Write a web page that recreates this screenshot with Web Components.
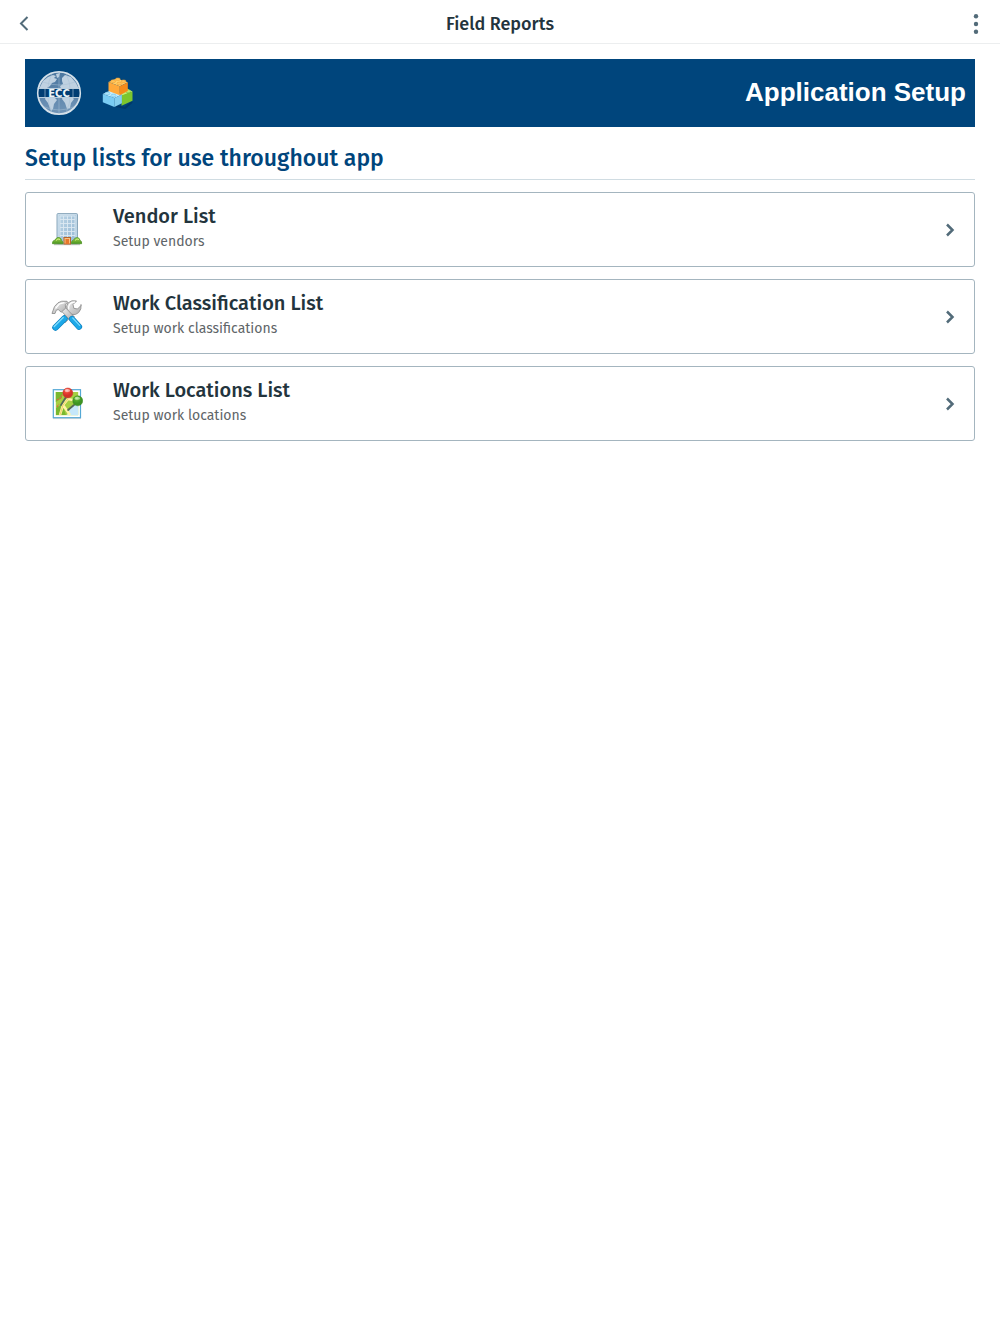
<!DOCTYPE html>
<html lang="en">
<head>
<meta charset="utf-8">
<meta name="viewport" content="width=device-width, initial-scale=1">
<title>Field Reports</title>
<style>
    body {
        --brand-color: #00457c;
        --text-color: #23343d;
        --text-secondary: #606568;
        --icon-color: #526b79;
        --border-color: #a4b5bf;
        --divider-color: #d0dce2;
        margin: 0;
        background: #fff;
        color: var(--text-color);
        font-family: "Fira Sans", "Noto Sans", sans-serif;
    }
    main {
        display: flex;
        flex-direction: column;
        gap: 12px;
        padding: 15px 25px;
    }
</style>
</head>
<body>
<app-header title-text="Field Reports"></app-header>
<main>
    <app-banner>Application Setup</app-banner>
    <section-title>Setup lists for use throughout app</section-title>
    <list-card href="#vendors" icon="building">
        Vendor List
        <span slot="detail">Setup vendors</span>
    </list-card>
    <list-card href="#classifications" icon="tools">
        Work Classification List
        <span slot="detail">Setup work classifications</span>
    </list-card>
    <list-card href="#locations" icon="map">
        Work Locations List
        <span slot="detail">Setup work locations</span>
    </list-card>
</main>

<script>
const ICONS = {
    building: `
        <defs>
            <linearGradient id="wall" x2="1" y2="1"><stop stop-color="#bdd5e6"/><stop offset="1" stop-color="#94b8d3"/></linearGradient>
            <linearGradient id="bush" x2="0" y2="1"><stop stop-color="#a4d84d"/><stop offset="1" stop-color="#4b9420"/></linearGradient>
        </defs>
        <path d="M3 31.5h26" stroke="#777" stroke-opacity=".45" stroke-width="1.4"/>
        <rect x="6" y=".6" width="20.5" height="30" rx="1" fill="url(#wall)" stroke="#8aa7bb"/>
        <rect x="7.2" y="1.7" width="18" height="27" fill="none" stroke="#d3e3ee" stroke-width=".8"/>
        <path d="M9 6.5h15M9 10.5h15M9 14.5h15M9 18.5h15M9 22.5h15M12.5 3v21M16.5 3v21M20.5 3v21M9 3v21M24 3v21M9 3h15" stroke="#dce9f2" stroke-width=".9" fill="none"/>
        <rect x="13" y="24.5" width="6.5" height="6.5" fill="#f8c080" stroke="#b8652b"/>
        <rect x="14.5" y="26" width="3.5" height="5" fill="#e7772b"/>
        <path d="M1.5 30.7q-.3-3 2.3-3.5 2-3.6 4.5-2.6 2 .7 2.200 2.800 2 .8 1.500 3.300zM20.500 30.700q-.4-3 1.800-3.400 2-3.500 4.600-2.600 2 .7 2 2.600 2.300 1 1.700 3.400z" fill="url(#bush)" stroke="#55972c" stroke-width=".9"/>
        <path d="M5 27.500q2-2.600 4-.8M24 27.400q2-2.500 4-.7" stroke="#ccec7e" fill="none"/>`,
    tools: `
        <defs>
            <linearGradient id="steel" x2="1" y2="1"><stop stop-color="#f4f4f4"/><stop offset="1" stop-color="#a8a8a8"/></linearGradient>
        </defs>
        <path d="m10 19 8-8 4 4-8 8z" fill="#d0d0d0" stroke="#999" stroke-width=".7"/>
        <path d="M30 5.500 26.500 9 22.800 8.300 22 4.500 25.500 1q-5-1.300-8.200 1.800-2.600 3-1.300 6.800l-3 3.200 4.600 4.600 3.200-3q4 1 6.800-1.800 3.200-3.400 2.400-8.100z" fill="url(#steel)" stroke="#919191" stroke-width=".9"/>
        <path d="M24 2.200q-3.500-.3-5.400 2.200-1.500 2.300-.7 5" stroke="#fff" stroke-width="1.200" fill="none"/>
        <path d="M13.500 18.500 4.500 27.500" stroke="#0c82c2" stroke-width="6.400" stroke-linecap="round"/>
        <path d="M13.500 18.500 4.500 27.500" stroke="#1ca8e8" stroke-width="5" stroke-linecap="round"/>
        <path d="m12.200 17.600-9 9" stroke="#7dd9fb" stroke-width="1.400" stroke-linecap="round"/>
        <path d="m10.200 10.800 3.800-3.600 9.300 9.600-4 3.700z" fill="url(#steel)" stroke="#888" stroke-width=".8"/>
        <path d="M1 13.500 3.500 6.500 7 2.800Q10 .4 16 1.300l1 1.300-2.800 2.200.6 3.200-4.600 4.200-3-2.700-2 .8-1.200 3.200z" fill="url(#steel)" stroke="#919191" stroke-width=".9"/>
        <path d="m4.500 8.500 4-4.600 5-1.200" stroke="#fff" stroke-width="1.200" fill="none"/>
        <path d="m21 19 7 7.800" stroke="#0c82c2" stroke-width="6.200" stroke-linecap="round"/>
        <path d="m21 19 7 7.800" stroke="#1ca8e8" stroke-width="4.800" stroke-linecap="round"/>
        <path d="m21.800 18 6.800 7.400" stroke="#79d7fb" stroke-width="1.300" stroke-linecap="round"/>`,
    map: `
        <defs>
            <radialGradient id="red" cx=".4" cy=".25"><stop stop-color="#ff9a86"/><stop offset=".5" stop-color="#ed4335"/><stop offset="1" stop-color="#d0332a"/></radialGradient>
            <radialGradient id="green" cx=".4" cy=".25"><stop stop-color="#a8e46b"/><stop offset=".5" stop-color="#50aa2b"/><stop offset="1" stop-color="#3d9423"/></radialGradient>
        </defs>
        <path d="M2 31.600h28" stroke="#777" stroke-opacity=".3"/>
        <rect x="2.300" y="2.700" width="27.200" height="28" fill="#fff" stroke="#54a8d5" stroke-width="1.200"/>
        <rect x="4.800" y="5" width="22.400" height="23.200" fill="#a5cf43"/>
        <path d="M4.800 5h7l-1 6-6 4zM5 21l6-4 4 11H5z" fill="#79b82f"/>
        <path d="m16 28 4-8 7.200-4v12.200z" fill="#c5e7fa"/>
        <path d="m9 28 3-10 5-6 10 2M12 18l7 10" stroke="#fff4a6" stroke-width="2.500" fill="none"/>
        <path d="M9 28 12 18l5-6" stroke="#e8bb4a" stroke-width=".7" fill="none"/>
        <path d="m6 13 3-2m-3 9 2-3m1-5 2-4" stroke="#df6541" stroke-width="1.200" stroke-dasharray="2 1"/>
        <path d="m15 10-5 8M23 18l-6 5" stroke="#53695a" stroke-width="1.700" stroke-linecap="round"/>
        <circle cx="16.800" cy="6" r="5" fill="url(#red)" stroke="#ca342b" stroke-width=".5"/>
        <ellipse cx="16.400" cy="3.400" rx="2.800" ry="1.500" fill="#fff" opacity=".5"/>
        <circle cx="26.700" cy="13.800" r="5" fill="url(#green)" stroke="#39831f" stroke-width=".5"/>
        <ellipse cx="26.300" cy="11.200" rx="2.800" ry="1.500" fill="#fff" opacity=".45"/>`
};

class AppHeader extends HTMLElement {
    constructor() {
        super();
        this.attachShadow({ mode: 'open' });
    }

    connectedCallback() {
        const title = this.getAttribute('title-text') || '';

        this.shadowRoot.innerHTML = `
        <style>
            :host {
                display: grid;
                grid-template-columns: 48px 1fr 48px;
                align-items: center;
                height: 43px;
                border-bottom: 1px solid #eceeef;
            }
            h1 {
                margin: 0;
                padding-top: 4px;
                font-size: 18px;
                line-height: 24px;
                font-weight: 500;
                text-align: center;
            }
            button {
                display: flex;
                align-items: center;
                justify-content: center;
                height: 43px;
                padding: 4px 0 0;
                border: 0;
                background: none;
                color: var(--icon-color);
            }
        </style>
        <button type="button" aria-label="Back">
            <svg width="16" height="20" viewBox="0 0 16 20" fill="none" stroke="currentColor" stroke-width="2"><path d="M11.500 3 5 9.500l6.500 6.500"/></svg>
        </button>
        <h1>${title}</h1>
        <button type="button" aria-label="More options">
            <svg width="8" height="20" viewBox="0 0 8 20" fill="currentColor"><circle cx="4" cy="2.200" r="2.200"/><circle cx="4" cy="10" r="2.200"/><circle cx="4" cy="17.800" r="2.200"/></svg>
        </button>
        `;
    }
}

class AppBanner extends HTMLElement {
    constructor() {
        super();
        this.attachShadow({ mode: 'open' });
    }

    connectedCallback() {
        this.shadowRoot.innerHTML = `
        <style>
            :host {
                display: flex;
                align-items: center;
                gap: 20px;
                height: 68px;
                padding: 0 9px 0 11px;
                background: var(--brand-color);
                color: #fff;
            }
            .title {
                flex: 1;
                padding-bottom: 2px;
                font-family: "Liberation Sans", Arial, sans-serif;
                font-size: 26px;
                line-height: 32px;
                font-weight: 700;
                text-align: right;
            }
        </style>
        <svg width="46" height="46" viewBox="0 0 46 46" role="img" aria-label="ECC">
            <defs>
                <linearGradient id="sea" x2="0" y2="1"><stop stop-color="#4a769f"/><stop offset="1" stop-color="#7195b8"/></linearGradient>
                <clipPath id="globe"><circle cx="23" cy="23" r="20.500"/></clipPath>
            </defs>
            <circle cx="23" cy="23" r="21.200" fill="url(#sea)" stroke="#d4e0e9" stroke-width="1.800"/>
            <g clip-path="url(#globe)">
                <path d="M4 17 7 11 12 7l5-2 3 1-2 2 3 1-2 3-3 1-2 3-3 2H4zM20 4l4-1-1 4-2 1zM26 8l3-3 6 2 5 6 3 6-4-1-2 2h-5l-3-2-4 1-1-3 3-2-1-3zM10 26l8 1 3 3-3 4-1 5-2 2-3-8-3-4zM27 26h8l3 3-3 4-1 5-3 1-2-6-3-4z" fill="#bfd1e1"/>
                <path d="M7 12q16 6 32 0M6 36q17 8 34 0M16 3q-9 20 0 40M30 3q9 20 0 40M23 2v42" fill="none" stroke="#a9c1d5" stroke-width=".5"/>
                <path d="M0 18h46v10H0z" fill="#b9cddd"/>
                <path d="M0 19h46v8H0z" fill="#003d73"/>
                <path d="M9 19v8M37 19v8" stroke="#6f94b5" stroke-width="1"/>
            </g>
            <text x="23" y="26.600" text-anchor="middle" font-family="DejaVu Sans" font-size="10" font-weight="700" fill="#eef4f8">ECC</text>
        </svg>
        <svg width="32" height="32" viewBox="0 0 32 32" aria-hidden="true">
            <path d="m14 29 9 2 7-6" stroke="#002c57" stroke-opacity=".5" stroke-width="2" fill="none"/>
            <path d="m18 14 7-2.500 5.500 3L20 19z" fill="#c3ef75"/>
            <path d="m19.500 18.500 11-4v9.300l-11 5z" fill="#7cc62d"/>
            <ellipse cx="26" cy="14.200" rx="2.600" ry="1.500" fill="#bcea6c" stroke="#72b736" stroke-width=".5"/>
            <path d="m.8 17 7.500-3.500 11.600 4-7.500 3.500z" fill="#c3edff"/>
            <path d="m.8 17 11.600 4v9L.8 25.300z" fill="#7accf3"/>
            <path d="m12.400 21 7.500-3.500v8.700L12.400 30z" fill="#86cfee"/>
            <g fill="#ace4fc" stroke="#60b8df" stroke-width=".5"><ellipse cx="5.500" cy="16.500" rx="2.500" ry="1.400"/><ellipse cx="11.500" cy="18.500" rx="2.500" ry="1.400"/></g>
            <path d="m6.500 5 8-3.500 11.300 3.800-8 4z" fill="#ffcf68"/>
            <path d="m6.500 5 11.300 4.300v9L6.500 14z" fill="#ffa93a"/>
            <path d="m17.800 9.300 8-4V14l-8 4.300z" fill="#f58b1a"/>
            <g fill="#ffc35a" stroke="#ee9726" stroke-width=".5">
                <ellipse cx="15.900" cy="2.200" rx="2.400" ry="1.300"/>
                <ellipse cx="21.600" cy="4.200" rx="2.400" ry="1.300"/>
                <ellipse cx="11.200" cy="4.200" rx="2.500" ry="1.400"/>
                <ellipse cx="17.400" cy="6.500" rx="2.500" ry="1.400"/>
            </g>
        </svg>
        <div class="title"><slot></slot></div>
        `;
    }
}

class SectionTitle extends HTMLElement {
    constructor() {
        super();
        this.attachShadow({ mode: 'open' });
    }

    connectedCallback() {
        this.shadowRoot.innerHTML = `
        <style>
            :host {
                display: block;
                border-bottom: 1px solid var(--divider-color);
                color: var(--brand-color);
            }
            h2 {
                margin: 0;
                padding: 3px 0 5px;
                font-size: 23px;
                line-height: 32px;
                font-weight: 500;
            }
        </style>
        <h2><slot></slot></h2>
        `;
    }
}

class ListCard extends HTMLElement {
    constructor() {
        super();
        this.attachShadow({ mode: 'open' });
    }

    connectedCallback() {
        const href = this.getAttribute('href') || '#';
        const icon = ICONS[this.getAttribute('icon')] || '';

        this.shadowRoot.innerHTML = `
        <style>
            :host {
                display: block;
            }
            a {
                display: flex;
                align-items: center;
                box-sizing: border-box;
                min-height: 75px;
                padding: 0 16px 0 25px;
                border: 1px solid var(--border-color);
                border-radius: 3px;
                color: inherit;
                text-decoration: none;
            }
            .text {
                flex: 1;
                padding: 0 30px 4px;
            }
            .name {
                font-size: 20px;
                line-height: 28px;
                font-weight: 500;
            }
            .detail {
                color: var(--text-secondary);
                font-size: 14px;
                line-height: 24px;
            }
            .chevron {
                color: var(--icon-color);
            }
        </style>
        <a href="${href}">
            <svg width="32" height="33" viewBox="0 0 32 33" aria-hidden="true">${icon}</svg>
            <div class="text">
                <div class="name"><slot></slot></div>
                <div class="detail"><slot name="detail"></slot></div>
            </div>
            <svg class="chevron" width="16" height="16" viewBox="0 0 16 16" fill="none" stroke="currentColor" stroke-width="2.500" aria-hidden="true"><path d="m5 2.500 5.500 5.500L5 13.500"/></svg>
        </a>
        `;
    }
}

customElements.define('app-header', AppHeader);
customElements.define('app-banner', AppBanner);
customElements.define('section-title', SectionTitle);
customElements.define('list-card', ListCard);
</script>
</body>
</html>
